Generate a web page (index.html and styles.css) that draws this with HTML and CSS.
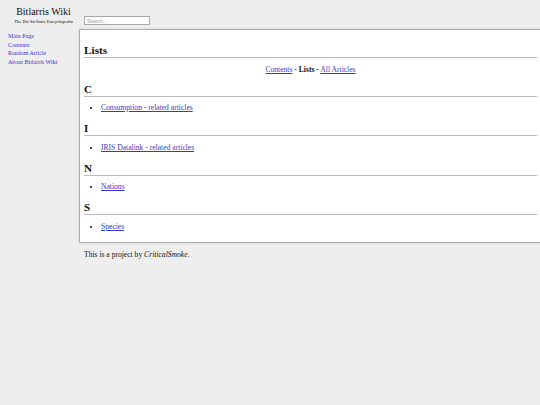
FILE: index.html
```html
<!DOCTYPE html>
<html lang="en">
<head>
  <meta charset="UTF-8">
  <title>Lists - Bitlarris Wiki</title>
  <link rel="stylesheet" href="styles.css">
</head>
<body>

  <div class="topo">
    <div class="marca">
      <div class="titulo">Bitlarris Wiki</div>
      <div class="subtitulo">The Bit Stellaris Encyclopedia</div>
    </div>
    <input class="busca" type="text" placeholder="Search...">
  </div>

  <div class="pagina">
    <nav class="lateral">
      <a href="#">Main Page</a>
      <a href="#">Contents</a>
      <a href="#">Random Article</a>
      <a href="#">About Bitlarris Wiki</a>
    </nav>

    <div class="principal">
      <div class="conteudo">
        <h1>Lists</h1>
        <p class="navegacao"><a href="#">Contents</a> - <strong>Lists</strong> - <a href="#">All Articles</a></p>

        <h2>C</h2>
        <ul>
          <li><a href="#">Consumption - related articles</a></li>
        </ul>

        <h2>I</h2>
        <ul>
          <li><a href="#">IRIS Datalink - related articles</a></li>
        </ul>

        <h2>N</h2>
        <ul>
          <li><a href="#">Nations</a></li>
        </ul>

        <h2>S</h2>
        <ul>
          <li><a href="#">Species</a></li>
        </ul>
      </div>

      <p class="rodape">This is a project by <i>CriticalSmoke</i>.</p>
    </div>
  </div>

</body>
</html>
```

FILE: styles.css
```css
body {
  font-family: "Liberation Serif", "Times New Roman", serif;
  font-size: 7.6px;
  line-height: 9px;
  margin: 0;
  background-color: #eeeeee;
  color: #111;
  overflow-x: hidden;
}

a {
  color: #3838c8;
}

/* cabeçalho */
.topo {
  display: flex;
  align-items: flex-end;
  gap: 5px;
  padding: 6px 0 0 8px;
}

.marca {
  width: 71px;
  text-align: center;
}

.titulo {
  font-size: 10px;
  line-height: 12px;
}

.subtitulo {
  font-size: 4.8px;
  line-height: 6px;
  margin-top: 1px;
}

.busca {
  box-sizing: border-box;
  width: 66px;
  height: 9px;
  padding: 0 2px;
  border: 1px solid #a8a8a8;
  background-color: #fff;
  font-family: "Liberation Sans", Arial, sans-serif;
  font-size: 5px;
}

.busca::placeholder {
  color: #999;
}

/* corpo da página */
.pagina {
  display: flex;
  margin-top: 4px;
}

.lateral {
  width: 71px;
  padding: 3px 0 0 8px;
  display: flex;
  flex-direction: column;
  font-size: 6px;
  line-height: 8.7px;
}

.lateral a {
  text-decoration: none;
}

.principal {
  flex: 1;
  min-width: 0;
}

.conteudo {
  background-color: #fff;
  border: 1px solid #b0b0b0;
  box-shadow: 0 0 2px rgba(0, 0, 0, 0.15);
  margin-right: -2px;
  padding: 0 4px 5px;
  overflow: hidden;
}

h1, h2 {
  font-size: 11px;
  line-height: 14px;
  font-weight: bold;
  border-bottom: 1px solid #bbbbbb;
}

h1 {
  font-size: 11.3px;
  margin: 13px 0 6.5px;
}

h2 {
  margin: 9px 0 6.5px;
}

.navegacao {
  text-align: center;
  margin: 6.5px 0 8px;
}

.navegacao + h2 {
  margin-top: 8px;
}

ul {
  margin: 6.5px 0;
  padding-left: 17px;
}

.rodape {
  margin: 6.5px 0;
  padding-left: 5px;
}
```
